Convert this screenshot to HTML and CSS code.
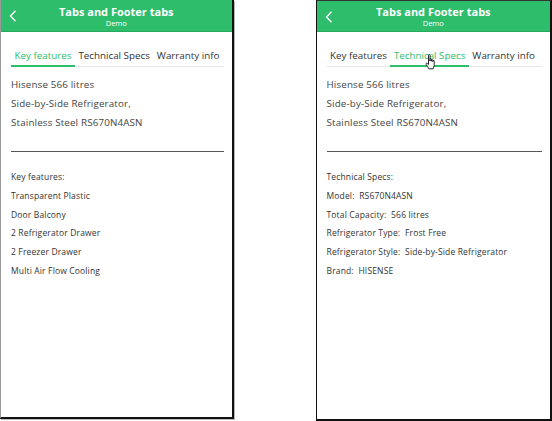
FILE: index.html
```html
<!DOCTYPE html>
<html>
<head>
<meta charset="utf-8">
<link rel="stylesheet" href="styles.css">
</head>
<body>
<div class="stage">
  <div class="phone phone-left">
    <header class="bar">
      <svg class="back" width="8" height="12" viewBox="0 0 8 12"><path d="M6.5 0.8 L1.5 6 L6.5 11.2" fill="none" stroke="#fff" stroke-width="1.4"/></svg>
      <div class="titles">
        <div class="title">Tabs and Footer tabs</div>
        <div class="sub">Demo</div>
      </div>
    </header>
    <nav class="tabs">
      <span class="tab active">Key features</span>
      <span class="tab">Technical Specs</span>
      <span class="tab">Warranty info</span>
    </nav>
    <div class="content">
      <div class="product">
        <p>Hisense 566 litres</p>
        <p>Side-by-Side Refrigerator,</p>
        <p>Stainless Steel RS670N4ASN</p>
      </div>
      <div class="divider"></div>
      <ul class="list">
        <li>Key features:</li>
        <li>Transparent Plastic</li>
        <li>Door Balcony</li>
        <li>2 Refrigerator Drawer</li>
        <li>2 Freezer Drawer</li>
        <li>Multi Air Flow Cooling</li>
      </ul>
    </div>
  </div>

  <div class="phone phone-right">
    <header class="bar">
      <svg class="back" width="8" height="12" viewBox="0 0 8 12"><path d="M6.5 0.8 L1.5 6 L6.5 11.2" fill="none" stroke="#fff" stroke-width="1.4"/></svg>
      <div class="titles">
        <div class="title">Tabs and Footer tabs</div>
        <div class="sub">Demo</div>
      </div>
    </header>
    <nav class="tabs">
      <span class="tab">Key features</span>
      <span class="tab active">Technical Specs
        <svg class="cursor" width="12" height="16" viewBox="0 0 12 16"><path d="M3.5 1.2 C3.5 0.4 5 0.4 5 1.2 L5 7 L5 5.6 C5 4.9 6.4 4.9 6.4 5.6 L6.4 7.2 L6.4 6.2 C6.4 5.5 7.8 5.5 7.8 6.2 L7.8 7.6 L7.8 6.8 C7.8 6.1 9.2 6.1 9.2 6.8 L9.2 10.5 C9.2 12.5 8.4 13.5 8.2 14.8 L3.8 14.8 C3.4 13.4 2.4 12.4 1.2 10.6 C0.6 9.6 1.4 8.8 2.2 9.4 L3.5 10.6 Z" fill="#fff" stroke="#111" stroke-width="0.9" stroke-linejoin="round"/></svg>
      </span>
      <span class="tab">Warranty info</span>
    </nav>
    <div class="content">
      <div class="product">
        <p>Hisense 566 litres</p>
        <p>Side-by-Side Refrigerator,</p>
        <p>Stainless Steel RS670N4ASN</p>
      </div>
      <div class="divider"></div>
      <ul class="list">
        <li>Technical Specs:</li>
        <li>Model:&nbsp; RS670N4ASN</li>
        <li>Total Capacity:&nbsp; 566 litres</li>
        <li>Refrigerator Type:&nbsp; Frost Free</li>
        <li>Refrigerator Style:&nbsp; Side-by-Side Refrigerator</li>
        <li>Brand:&nbsp; HISENSE</li>
      </ul>
    </div>
  </div>
</div>
</body>
</html>
```

FILE: styles.css
```css
html, body {
  margin: 0;
  padding: 0;
  background: #fff;
}
body {
  font-family: "Open Sans", "Noto Sans", sans-serif;
  color: #333;
}
.stage {
  display: flex;
  align-items: flex-start;
  gap: 82px;
}
.phone {
  box-sizing: border-box;
  background: #fff;
  display: flex;
  flex-direction: column;
}
.phone-left {
  width: 234px;
  height: 419px;
  border-left: 1px solid #9a9a9a;
  border-right: 2px solid #111;
  border-bottom: 2px solid #111;
  box-shadow: 1px 1px 0 #bbb;
}
.phone-right {
  width: 237px;
  height: 421px;
  border-left: 1px solid #111;
  border-top: 1px solid #333;
  border-right: 2px solid #111;
  border-bottom: 2px solid #111;
}
.bar {
  position: relative;
  height: 32px;
  background: #2dbd6b;
  border-bottom: 1px solid #27a95e;
  box-sizing: border-box;
  display: flex;
  align-items: center;
  justify-content: center;
  color: #fff;
}
.phone-right .bar {
  height: 31px;
}
.back {
  position: absolute;
  left: 8px;
  top: 10px;
}
.titles {
  text-align: center;
  padding-top: 1px;
}
.title {
  font-weight: 700;
  font-size: 11px;
  line-height: 14px;
}
.sub {
  font-size: 7.5px;
  line-height: 9px;
}
.tabs {
  display: flex;
  margin: 16px 8px 0 10px;
  border-bottom: 1px solid #e6e6e6;
}
.tab {
  position: relative;
  padding: 0 3.5px 1px;
  margin-bottom: -1px;
  border-bottom: 2px solid transparent;
  font-size: 9.8px;
  line-height: 16px;
  color: #333;
  white-space: nowrap;
}
.tab.active {
  color: #2dbd6b;
  border-bottom-color: #2dbd6b;
}
.cursor {
  position: absolute;
  left: 35px;
  top: 6px;
}
.content {
  padding: 8px 8px 0 10px;
}
.product p {
  margin: 0;
  font-size: 9.8px;
  line-height: 19px;
  color: #444;
  letter-spacing: 0.15px;
}
.divider {
  height: 1px;
  background: #555;
  margin: 19px 0 16px;
}
.list {
  list-style: none;
  margin: 0;
  padding: 0;
}
.list li {
  font-size: 8.5px;
  line-height: 18.8px;
  color: #333;
  letter-spacing: 0.15px;
}
```
